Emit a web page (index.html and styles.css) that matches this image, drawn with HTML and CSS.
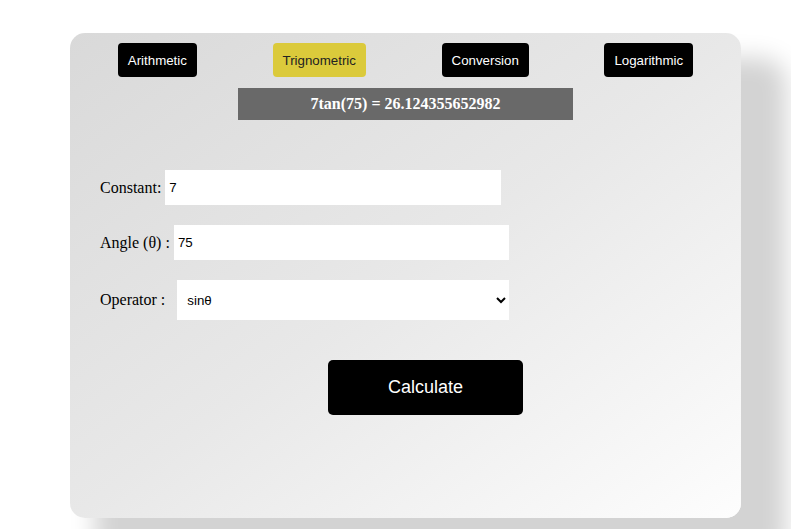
FILE: index.html
```html
<!DOCTYPE html>
<html>
<head>
<meta charset="utf-8">
<link rel="stylesheet" href="styles.css">
</head>
<body>
<div class="card">
  <nav class="tabs">
    <button class="tab">Arithmetic</button>
    <button class="tab active">Trignometric</button>
    <button class="tab">Conversion</button>
    <button class="tab">Logarithmic</button>
  </nav>
  <div class="result">7tan(75) = 26.124355652982</div>
  <form class="form">
    <div class="row row-const">
      <label>Constant:</label>
      <input class="field f1" type="text" value="7">
    </div>
    <div class="row row-angle">
      <label>Angle (θ) :</label>
      <input class="field f2" type="text" value="75">
    </div>
    <div class="row row-op">
      <label>Operator :</label>
      <select class="select">
        <option>sinθ</option>
        <option>cosθ</option>
        <option>tanθ</option>
      </select>
    </div>
    <div class="actions">
      <button type="button" class="calc">Calculate</button>
    </div>
  </form>
</div>
</body>
</html>
```
FILE: styles.css
```css
html, body {
  margin: 0;
  padding: 0;
  background: #fff;
  overflow: hidden;
}
body {
  font-family: "Liberation Serif", serif;
  height: 529px;
}
.card {
  margin: 33px 0 0 70px;
  width: 671px;
  height: 485px;
  border-radius: 15px;
  background: linear-gradient(to bottom right, #d9d9d9 0%, #e8e8e8 50%, #fdfdfd 100%);
  box-shadow: 35px 35px 25px 10px #d3d3d3;
  box-sizing: border-box;
  padding-top: 10px;
}
.tabs {
  display: flex;
  justify-content: space-around;
  padding: 0 10px;
}
.tab {
  font-family: "Liberation Sans", Arial, sans-serif;
  font-size: 13.3px;
  height: 34px;
  padding: 0 10px;
  border: none;
  border-radius: 4px;
  background: #000;
  color: #fff;
}
.tab.active {
  background: #dbca3b;
  color: #222;
}
.result {
  width: 335px;
  height: 32px;
  margin: 11px auto 0;
  background: #696969;
  color: #fff;
  font-weight: bold;
  font-size: 16px;
  display: flex;
  align-items: center;
  justify-content: center;
}
.form {
  padding: 50px 0 0 30px;
  margin: 0;
}
.row {
  display: flex;
  align-items: center;
  font-size: 16px;
  color: #000;
}
.row label {
  margin-right: 4px;
}
.field {
  font-family: "Liberation Sans", Arial, sans-serif;
  font-size: 13.3px;
  height: 35px;
  width: 336px;
  box-sizing: border-box;
  border: none;
  padding: 0 4px;
  background: #fff;
  color: #000;
  outline: none;
}
.f2 {
  width: 335px;
}
.row-angle {
  margin-top: 20px;
}
.row-op {
  margin-top: 20px;
}
.row-op label {
  margin-right: 12px;
}
.select {
  font-family: "Liberation Sans", Arial, sans-serif;
  font-size: 13.3px;
  height: 40px;
  width: 332px;
  border: none;
  background: #fff;
  color: #000;
  padding: 0 6px;
  outline: none;
}
.actions {
  margin-top: 40px;
  padding-left: 228px;
}
.calc {
  font-family: "Liberation Sans", Arial, sans-serif;
  font-size: 18px;
  width: 195px;
  height: 55px;
  border: none;
  border-radius: 5px;
  background: #000;
  color: #fff;
}
```
